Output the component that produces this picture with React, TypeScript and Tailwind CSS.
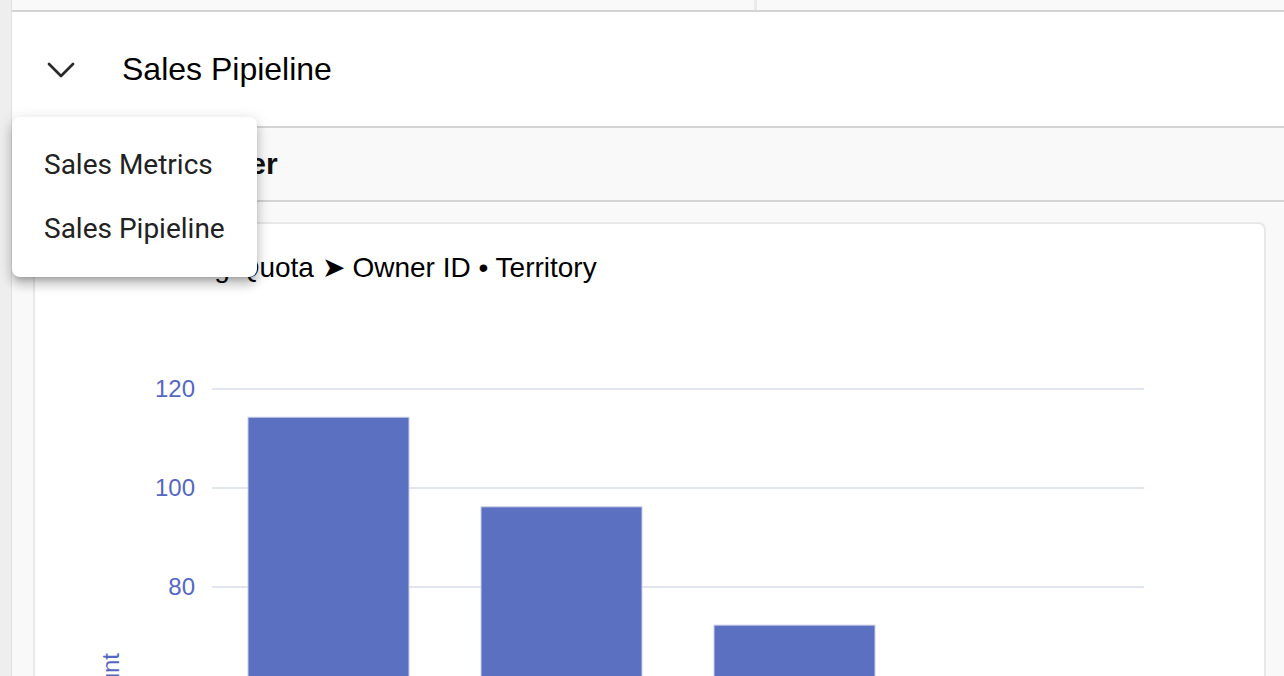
import React from 'react';

interface Bar {
  label: string;
  value: number;
}

const BARS: Bar[] = [
  { label: 'A', value: 114.3 },
  { label: 'B', value: 96.2 },
  { label: 'C', value: 72.3 },
  { label: 'D', value: 52 },
];

const TICKS = [120, 100, 80];

// chart geometry (svg coordinates)
const PLOT_LEFT = 177;
const PLOT_RIGHT = 1109;
const Y120 = 89;
const PX_PER_UNIT = 99 / 20;
const BAR_W = 161;
const PITCH = 233;

const yFor = (v: number) => Y120 + (120 - v) * PX_PER_UNIT;

const QuotaChart: React.FC = () => (
  <svg width={1229} height={420} className="block">
    {[...TICKS, 60].map((t) => (
      <line key={t} x1={PLOT_LEFT} x2={PLOT_RIGHT} y1={yFor(t)} y2={yFor(t)} stroke="#e1e5f0" strokeWidth={2} />
    ))}
    {TICKS.map((t) => (
      <text
        key={t}
        x={160}
        y={yFor(t) + 8}
        textAnchor="end"
        fontSize={24}
        fill="#5567c4"
        fontFamily="'Liberation Sans', Arial, sans-serif"
      >
        {t}
      </text>
    ))}
    {BARS.map((b, i) => (
      <rect
        key={b.label}
        x={PLOT_LEFT + 36 + i * PITCH}
        y={yFor(b.value)}
        width={BAR_W}
        height={420 - yFor(b.value)}
        fill="#5b70c0"
        stroke="#c9cfe9"
        strokeWidth={1}
      />
    ))}
    <text
      x={75}
      y={385}
      textAnchor="middle"
      dominantBaseline="central"
      fontSize={24}
      fill="#5567c4"
      fontFamily="'Liberation Sans', Arial, sans-serif"
      transform="rotate(-90 75 385)"
    >
      Count
    </text>
  </svg>
);

export default function App() {
  return (
    <div className="flex h-[676px] w-[1284px] overflow-hidden bg-[#f9f9f9] font-['Liberation_Sans',Arial,sans-serif]">
      {/* left rail */}
      <div className="w-[12px] shrink-0 border-r border-[#e0e0e0] bg-[#eeeeee]" />

      <div className="relative flex min-w-0 flex-1 flex-col">
        {/* top strip */}
        <div className="flex h-[12px] shrink-0 border-b-2 border-[#d4d4d4] bg-[#f9f9f9]">
          <div className="w-[745px] border-r-[3px] border-[#ebebeb]" />
          <div className="flex-1" />
        </div>

        {/* section header */}
        <div className="flex h-[116px] shrink-0 items-center border-b-2 border-[#d4d4d4] bg-white pl-[35px]">
          <svg width={28} height={16} viewBox="0 0 28 16" className="mt-[1px]">
            <polyline points="2,2 14,14 26,2" fill="none" stroke="#2a2a2a" strokeWidth={2.8} strokeLinecap="round" strokeLinejoin="round" />
          </svg>
          <h1 className="ml-[47px] text-[32px] leading-none text-black">Sales Pipieline</h1>
        </div>

        {/* sub header */}
        <div className="flex h-[74px] shrink-0 items-center border-b-2 border-[#d4d4d4] bg-[#f9f9f9] pl-[34px]">
          <h2 className="text-[30px] font-bold leading-none text-[#111111]">Quota by Owner</h2>
        </div>

        {/* content */}
        <div className="flex min-h-0 flex-1 pl-[21px] pr-[18px] pt-[20px]">
          <div className="flex flex-1 flex-col rounded-t-lg border-2 border-b-0 border-[#e8e8e8] bg-white">
            <p className="pl-[61px] pt-[28px] text-[28px] leading-[32px] text-black">
              Remaining Quota ➤ Owner ID • Territory
            </p>
            <div className="mt-[16px]">
              <QuotaChart />
            </div>
          </div>
        </div>

        {/* open menu */}
        <div className="absolute left-0 top-[117px] w-[245px] rounded-lg bg-white py-[16px] font-['Roboto',sans-serif] shadow-[0_5px_5px_-3px_rgba(0,0,0,0.2),0_8px_10px_1px_rgba(0,0,0,0.14),0_3px_14px_2px_rgba(0,0,0,0.12)]">
          {['Sales Metrics', 'Sales Pipieline'].map((item) => (
            <div key={item} className="flex h-[64px] items-center pl-[32px] text-[28px] text-[#222222]">
              {item}
            </div>
          ))}
        </div>
      </div>
    </div>
  );
}
